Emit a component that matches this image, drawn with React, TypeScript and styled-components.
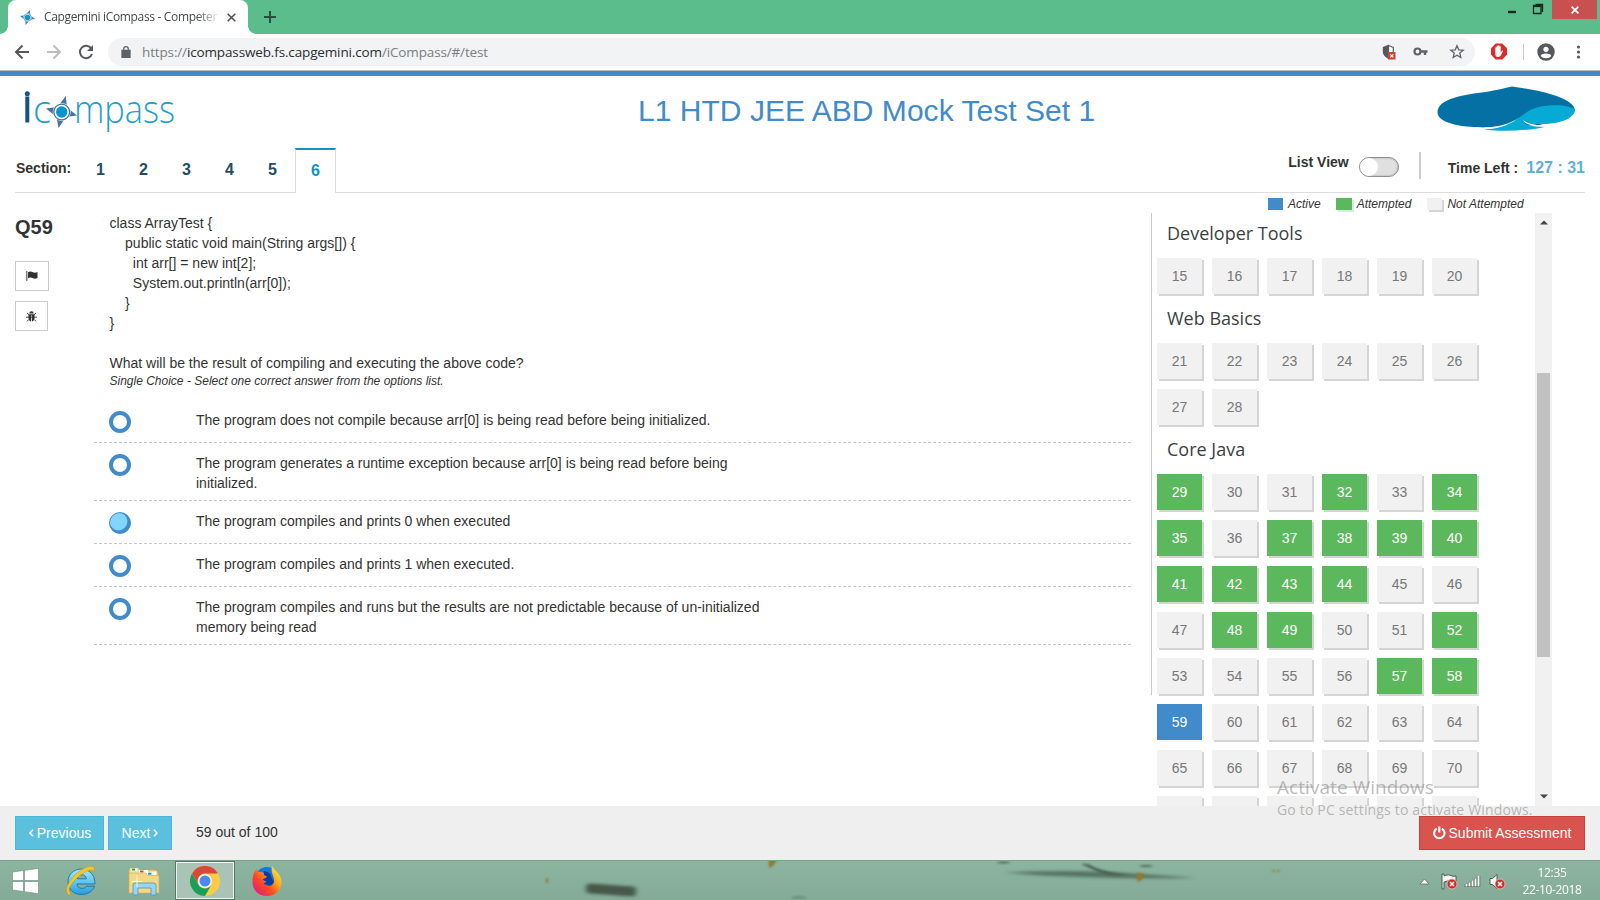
import React from "react";
import styled, { createGlobalStyle, css } from "styled-components";

const arial = `"Liberation Sans", Arial, sans-serif`;
const segoe = `"Open Sans", "Noto Sans", sans-serif`;

const GlobalStyle = createGlobalStyle`
  *, *::before, *::after { box-sizing: border-box; }
  body { margin: 0; background: #fff; color: #333; font-family: ${arial}; font-size: 14px; line-height: 20px; overflow: hidden; }
  svg { display: block; flex: none; }
  h1, h2, p, pre { margin: 0; font-weight: 400; }
`;

const Screen = styled.div`
  position: relative;
  display: flex;
  flex-direction: column;
  width: 1600px;
  height: 900px;
  overflow: hidden;
`;

/* Browser chrome */
const TabStrip = styled.div`
  display: flex;
  align-items: flex-start;
  height: 34px;
  padding-left: 8px;
  background: #5bbd8b;
  flex: none;
`;
const BrowserTab = styled.div`
  position: relative;
  display: flex;
  align-items: center;
  width: 240px;
  height: 34px;
  padding: 0 9px 0 12px;
  background: #fff;
  border-radius: 8px 8px 0 0;
  &::before, &::after {
    content: "";
    position: absolute;
    bottom: 0;
    width: 8px;
    height: 8px;
  }
  &::before { left: -8px; background: radial-gradient(circle at 0 0, transparent 7.5px, #fff 8px); }
  &::after { right: -8px; background: radial-gradient(circle at 100% 0, transparent 7.5px, #fff 8px); }
`;
const TabTitle = styled.div`
  width: 177px;
  margin-left: 9px;
  white-space: nowrap;
  font: 12px/20px ${segoe};
  letter-spacing: -0.34px;
  color: #45494d;
  mask-image: linear-gradient(90deg, #000 86%, transparent 100%);
`;
const TabClose = styled.svg`margin-left: auto; margin-right: 3px;`;
const NewTab = styled.svg`margin: 10px 0 0 15px;`;
const WindowButtons = styled.div`
  display: flex;
  align-items: flex-start;
  margin-left: auto;
  padding-right: 3px;
`;
const CloseWindow = styled.div`
  display: grid;
  place-items: center;
  width: 45px;
  height: 19px;
  background: #c75050;
`;
const Toolbar = styled.div`
  display: flex;
  align-items: center;
  height: 37px;
  padding: 0 12px 1px 14px;
  border-bottom: 1px solid #b9bcbf;
  flex: none;
`;
const NavIcons = styled.div`display: flex; gap: 16px; width: 94px;`;
const AddressBar = styled.div`
  display: flex;
  align-items: center;
  width: 1367px;
  height: 28px;
  padding: 0 5px 0 13px;
  border-radius: 14px;
  background: #f1f3f4;
`;
const Url = styled.div`
  margin-left: 11px;
  font: 13.5px/20px ${segoe};
  color: #7a7e83;
  letter-spacing: -0.14px;
  white-space: nowrap;
  b { font-weight: 400; color: #2b2d31; }
`;
const BarIcons = styled.div`display: flex; align-items: center; gap: 16px; margin-left: auto;`;
const ToolIcons = styled.div`display: flex; align-items: center; flex: 1; margin-left: 15px;`;
const ToolDivider = styled.i`width: 1px; height: 16px; margin: 0 13px 0 15px; background: #c9cccf;`;

/* Page header */
const PageHeader = styled.header`
  display: flex;
  align-items: flex-start;
  height: 71px;
  border-top: 5px solid #428bca;
  padding: 0 20px 0 20px;
  flex: none;
`;
const Title = styled.h1`
  margin: 18px 0 0 454px;
  font-size: 30px;
  line-height: 33px;
  letter-spacing: 0.03px;
  color: #428bca;
  white-space: nowrap;
`;
const BrandMark = styled.svg`margin: 8px 3px 0 auto;`;

const SectionBar = styled.nav`
  display: flex;
  height: 51px;
  margin: 0 15px;
  border-bottom: 1px solid #ddd;
  flex: none;
`;
const SectionLabel = styled.b`width: 64px; margin-top: 16px; padding-left: 1px;`;
const SectionTab = styled.div<{ $active?: boolean }>`
  width: 43px;
  height: 45px;
  margin-top: 6px;
  padding-top: 12px;
  text-align: center;
  font-size: 16px;
  font-weight: 700;
  color: #264c63;
  ${(p) => p.$active && css`
    width: 41px;
    margin-left: 1px;
    padding-top: 11px;
    color: #1390c4;
    background: #fff;
    border: 1px solid #ddd;
    border-top: 2px solid #1390c4;
    border-bottom: 0;
  `}
`;
const HeaderTools = styled.div`display: flex; margin-left: auto; align-items: flex-start;`;
const ListLabel = styled.b`margin-top: 10px;`;
const Toggle = styled.div`
  width: 40px;
  height: 20px;
  margin: 15px 20px 0 10px;
  border: 1px solid #8f8f8f;
  border-radius: 10px;
  background: #e0e0e0;
  box-shadow: inset 0 0 2px #999;
  &::before {
    content: "";
    display: block;
    width: 18px;
    height: 18px;
    border-radius: 50%;
    background: #fff;
  }
`;
const HeaderDivider = styled.i`width: 2px; height: 27px; margin: 10px 27px 0 0; background: #ccc;`;
const TimeLabel = styled.b`margin-top: 16px;`;
const TimeValue = styled.b`margin: 16px 0 0 8px; font-size: 16px; color: #5cb2d3;`;

/* Main area */
const Main = styled.main`display: flex; height: 613px; flex: none;`;
const QuestionSide = styled.aside`width: 94px; padding: 22px 0 0 15px;`;
const QuestionNo = styled.div`font-size: 20px; line-height: 24px; font-weight: 700; margin-bottom: 22px;`;
const SquareButton = styled.div<{ $w: number }>`
  display: grid;
  place-items: center;
  width: ${(p) => p.$w}px;
  height: 30px;
  margin-bottom: 10px;
  border: 1px solid #ccc;
`;
const Question = styled.section`width: 1037px; padding-top: 20px;`;
const Code = styled.pre`padding-left: 15.5px; font: 14px/20px ${arial};`;
const Prompt = styled.p`padding-left: 15.5px;`;
const Hint = styled.p`padding-left: 15.5px; font-size: 12px; line-height: 17px; font-style: italic;`;
const Options = styled.div`margin-top: 10px;`;
const Option = styled.div`
  display: flex;
  min-height: 43px;
  padding: 10px 0 7px 15px;
  border-bottom: 1px dashed #c6c6c6;
`;
const Radio = styled.div<{ $checked?: boolean }>`
  width: 22px;
  height: 22px;
  margin: 1px 65px -1px 0;
  border: 4px solid #428bca;
  border-radius: 50%;
  flex: none;
  ${(p) => p.$checked && css`
    border: 1px solid #428bca;
    background: radial-gradient(circle at 8.5px 8.5px, #82d5fd 8.3px, #428bca 9.3px);
  `}
`;

const SidePanel = styled.aside`margin-left: 20px; width: 434px;`;
const Legend = styled.div`
  display: flex;
  align-items: flex-start;
  height: 20px;
  padding: 5px 0 0 117px;
  font-size: 12px;
  line-height: 12px;
  font-style: italic;
`;
const LegendItem = styled.span`display: flex; white-space: nowrap; &:nth-child(2) { margin-left: 15px; } &:nth-child(3) { margin-left: 16px; }`;
const Swatch = styled.i<{ $color: string; $shadow: string; $w: number }>`
  width: ${(p) => p.$w}px;
  height: 12px;
  margin: 0 5px 0 0;
  background: ${(p) => p.$color};
  box-shadow: 2px 2px 0 ${(p) => p.$shadow};
`;
const PanelBody = styled.div`
  display: flex;
  height: 593px;
  overflow: hidden;
  background: linear-gradient(#ccc, #ccc) 0 0 / 1px 482px no-repeat;
`;
const Sections = styled.div`flex: 1; padding: 1px 0 0 6px;`;
const SectionName = styled.h2`padding: 7px 0 0 10px; height: 44px; font: 18px/24px ${segoe}; color: #3b3f42;`;
const Tiles = styled.div`
  display: grid;
  grid-template-columns: repeat(6, 45px);
  gap: 10px;
  margin-bottom: 5px;
`;
const tones = {
  none: css`background: #f1f1f1; color: #777; box-shadow: 2px 2px 0 #d5d5d5;`,
  done: css`background: #5cb85c; color: #fff; box-shadow: 2px 2px 0 #cfd8cf;`,
  active: css`background: #428bca; color: #fff; box-shadow: 2px 2px 0 #f3f8fc;`,
};
const Tile = styled.div<{ $tone: keyof typeof tones }>`
  height: 36px;
  line-height: 36px;
  text-align: center;
  ${(p) => tones[p.$tone]}
`;
const Scrollbar = styled.div`
  display: flex;
  flex-direction: column;
  align-items: center;
  width: 17px;
  margin-right: 33px;
  padding: 7px 0;
  background: #f1f1f1;
`;
const Thumb = styled.i`width: 13px; height: 284px; margin: 148px 0 auto; background: #c1c1c1;`;

/* Footer */
const Footer = styled.footer`
  display: flex;
  align-items: center;
  height: 54px;
  padding: 0 15px;
  background: #efefef;
  flex: none;
`;
const Button = styled.div<{ $w: number; $danger?: boolean }>`
  display: flex;
  align-items: center;
  justify-content: center;
  width: ${(p) => p.$w}px;
  height: 34px;
  color: #fff;
  white-space: nowrap;
  background: ${(p) => (p.$danger ? "#d9534f" : "#5bc0de")};
  border: 1px solid ${(p) => (p.$danger ? "#c9413d" : "#46b8da")};
  ${(p) => (p.$danger ? "margin-left: auto;" : "margin-right: 4px;")}
`;
const Progress = styled.span`margin: -2px 0 0 20px;`;

/* Taskbar */
const Taskbar = styled.div`
  position: relative;
  display: flex;
  height: 40px;
  border-top: 1px solid #7ca08f;
  background: linear-gradient(#8cb5a0, #84ab98);
  flex: none;
`;
const Wallpaper = styled.svg`position: absolute; left: 0; top: 0;`;
const TaskSlot = styled.div<{ $w: number; $open?: boolean }>`
  position: relative;
  display: grid;
  place-items: center;
  width: ${(p) => p.$w}px;
  height: 39px;
  ${(p) => p.$open && css`
    border: 1px solid #5b7468;
    background: #a9c3b6;
    box-shadow: inset 0 0 0 1px #eef5f1;
  `}
`;
const Tray = styled.div`position: relative; display: flex; align-items: flex-start; margin-left: auto; padding: 12px 18px 0 0;`;
const Clock = styled.div`
  width: 60px;
  margin: -9px 0 0 16px;
  font: 12px/17px ${segoe};
  letter-spacing: -0.35px;
  text-align: center;
  color: #fff;
  white-space: nowrap;
`;
const Watermark = styled.div`
  position: absolute;
  left: 1277px;
  top: 774px;
  color: rgba(130, 130, 130, 0.55);
  font: 19px/26px ${segoe};
  letter-spacing: 0.06px;
  white-space: nowrap;
`;
const WatermarkNote = styled.div`font-size: 14px; line-height: 20px; letter-spacing: 0.17px;`;

const Star4 = ({ size }: { size: number }) => (
  <svg width={size} height={size} viewBox="0 0 32 32">
    <path d="M21 0 22 11 32 19 21 21 12 32 11 22 0 13 11 11Z" fill="#4d7cab" />
    <circle cx="16" cy="16" r="9" fill="#fff" />
    <circle cx="16" cy="16" r="8" fill="none" stroke="#3c6e9f" strokeWidth="1.3" />
    <circle cx="16" cy="16" r="6" fill="#0c96cc" />
  </svg>
);

const Logo = () => (
  <svg width="164" height="66" viewBox="20 76 164 66">
    <g fontFamily="Open Sans, Noto Sans, sans-serif" fontWeight="300">
      <rect x="25.300" y="96.500" width="4" height="26" fill="#17508c" />
      <circle cx="27.300" cy="93.700" r="2.500" fill="#17508c" />
      <text x="33" y="122.500" fontSize="38" fill="#1f9fd0" textLength="18" lengthAdjust="spacingAndGlyphs">c</text>
      <text x="74" y="122.500" fontSize="38" fill="#1f9fd0" textLength="101" lengthAdjust="spacingAndGlyphs">mpass</text>
    </g>
    <path d="M65.800 96 67 107.500 77 115.500 66 117 58.500 128 56.500 117 46 108.500 57.500 107Z" fill="#46739f" />
    <circle cx="61.700" cy="112" r="9" fill="#fff" />
    <circle cx="61.700" cy="112" r="7.900" fill="none" stroke="#46739f" strokeWidth="1.300" />
    <circle cx="61.700" cy="112" r="5.700" fill="#0795cb" />
  </svg>
);

const Cross = ({ x, y }: { x: number; y: number }) => (
  <g>
    <circle cx={x} cy={y} r="5" fill="#cf2d28" stroke="#f1c3c0" strokeWidth=".8" />
    <path d={`M${x - 2} ${y - 2}l4 4m0-4l-4 4`} stroke="#fff" strokeWidth="1.6" />
  </g>
);

const done = new Set([29, 32, 34, 35, 37, 38, 39, 40, 41, 42, 43, 44, 48, 49, 52, 57, 58]);
const groups = [
  { name: "Developer Tools", from: 15, to: 20 },
  { name: "Web Basics", from: 21, to: 28 },
  { name: "Core Java", from: 29, to: 76 },
];
const code = `class ArrayTest {
    public static void main(String args[]) {
      int arr[] = new int[2];
      System.out.println(arr[0]);
    }
}

`;
const options: { lines: string[]; checked?: boolean }[] = [
  { lines: ["The program does not compile because arr[0] is being read before being initialized."] },
  { lines: ["The program generates a runtime exception because arr[0] is being read before being", "initialized."] },
  { lines: ["The program compiles and prints 0 when executed"], checked: true },
  { lines: ["The program compiles and prints 1 when executed."] },
  { lines: ["The program compiles and runs but the results are not predictable because of un-initialized", "memory being read"] },
];

const Chrome = () => (
  <>
    <TabStrip>
      <BrowserTab>
        <Star4 size={15} />
        <TabTitle>Capgemini iCompass - Competer</TabTitle>
        <TabClose width="9" height="9" viewBox="0 0 9 9"><path d="M.7.7l7.6 7.6m0-7.6L.7 8.3" stroke="#4a4d51" strokeWidth="1.5" /></TabClose>
      </BrowserTab>
      <NewTab width="14" height="14" viewBox="0 0 14 14"><path d="M7 1v12M1 7h12" stroke="#2c4c3d" strokeWidth="2" /></NewTab>
      <WindowButtons>
        <svg width="44" height="19" viewBox="0 0 44 19">
          <path d="M0 12h8" stroke="#16281f" strokeWidth="2.4" />
          <path d="M25.5 5.5h7.5v8h-7.5zM27.500 4.500h7v7.500" fill="none" stroke="#16281f" strokeWidth="1.3" />
          <path d="M25 6.300h8" stroke="#16281f" strokeWidth="1.6" />
        </svg>
        <CloseWindow><svg width="8" height="8" viewBox="0 0 8 8"><path d="M.6.6l6.800 6.800m0-6.800L.6 7.400" stroke="#fff" strokeWidth="1.7" /></svg></CloseWindow>
      </WindowButtons>
    </TabStrip>
    <Toolbar>
      <NavIcons>
        <svg width="16" height="16" viewBox="0 0 16 16"><path d="M15 8H2m6.500-6.500L2 8l6.500 6.500" fill="none" stroke="#55585c" strokeWidth="2" /></svg>
        <svg width="16" height="16" viewBox="0 0 16 16"><path d="M1 8h13M7.500 1.500L14 8l-6.500 6.500" fill="none" stroke="#bcbec1" strokeWidth="2" /></svg>
        <svg width="16" height="16" viewBox="0 0 16 16"><path d="M13.300 4.500A6.200 6.200 0 1 0 14 10" fill="none" stroke="#55585c" strokeWidth="2" /><path d="M15 1v6H9z" fill="#55585c" /></svg>
      </NavIcons>
      <AddressBar>
        <svg width="10" height="12" viewBox="0 0 10 12"><path d="M1 4.500h8v7H1zM2.700 5V3a2.300 2.300 0 0 1 4.600 0v2" fill="none" stroke="#5f6368" strokeWidth="1.300" /><path d="M1 4.500h8v7H1z" fill="#5f6368" /></svg>
        <Url>https://<b>icompassweb.fs.capgemini.com</b>/iCompass/#/test</Url>
        <BarIcons>
          <svg width="15" height="16" viewBox="0 0 15 16">
            <path d="M6.500 1.500L11.300 3.500V7.500C11.300 11 9 13 6.500 14Z" fill="#fff" stroke="#5f6368" strokeWidth="1.300" />
            <path d="M6.500 .8V14.700C3.500 13.500.8 11 .8 7.500V3Z" fill="#55585c" />
            <path d="M6 8h7.500v7.500H6z" fill="#cb4438" /><path d="M8.300 10.300l3 3m0-3l-3 3" stroke="#fff" strokeWidth="1.100" />
          </svg>
          <svg width="15" height="10" viewBox="0 0 15 10"><circle cx="4.500" cy="4.500" r="3" fill="none" stroke="#5f6368" strokeWidth="2.200" /><path d="M7 4.500h7.500M12 4v4" stroke="#5f6368" strokeWidth="2.400" /></svg>
          <svg width="26" height="16" viewBox="-5.500 0 26 16"><path d="M7.500 1.700l1.750 4.100 4.450.4-3.400 2.900 1 4.400-3.800-2.300-3.800 2.300 1-4.400-3.400-2.900 4.450-.4z" fill="none" stroke="#5f6368" strokeWidth="1.300" /></svg>
        </BarIcons>
      </AddressBar>
      <ToolIcons>
        <svg width="18" height="17" viewBox="0 0 18 17">
          <path d="M5.700.5h6.600L17 5.200v6.600l-4.700 4.700H5.700L1 11.800V5.200z" fill="#d92c2c" />
          <path d="M5.300 8.500V4.600q.8-.8 1.300 0V7.500 3q.8-.8 1.400 0v4.200V2.600q.8-.8 1.400 0v4.600V3.400q.8-.8 1.300 0v5.800l1.400-1.700q1-.3.900.5l-2.200 4.600q-.8 1.400-2.700 1.400-2.800 0-2.800-3z" fill="#fff" />
        </svg>
        <ToolDivider />
        <svg width="18" height="18" viewBox="0 0 18 18"><circle cx="9" cy="9" r="8.700" fill="#55585c" /><circle cx="9" cy="6.300" r="2.600" fill="#fff" /><path d="M3.700 13c1.200-3.200 9.400-3.200 10.600 0-2.400 3-8.200 3-10.600 0z" fill="#fff" /></svg>
        <svg width="30" height="14" viewBox="0 0 30 14"><g fill="#55585c"><circle cx="23.500" cy="2" r="1.600" /><circle cx="23.500" cy="7" r="1.600" /><circle cx="23.500" cy="12" r="1.600" /></g></svg>
      </ToolIcons>
    </Toolbar>
  </>
);

const Icons = {
  windows: <svg width="27" height="26" viewBox="0 0 27 26"><g fill="#fff" stroke="#698d7c" strokeWidth=".6"><path d="M.5 4l11-1.500v10H.5zM12.500 2.300L26.500.4v12.100h-14zM.5 13.500h11v10L.5 22zM12.500 13.500h14v12.200l-14-2z" /></g></svg>,
  ie: (
    <svg width="32" height="32" viewBox="0 0 32 32">
      <defs><linearGradient id="ieBlue" x1="0" y1="0" x2="0" y2="1"><stop offset="0" stopColor="#a5e6fb" /><stop offset=".5" stopColor="#5cc8f2" /><stop offset="1" stopColor="#2a9bdc" /></linearGradient></defs>
      <path d="M30 19H12c.2 5 7.500 5.800 9.500 2.200h8C26 33 3 33 3 16.500 3 .5 30-1.500 30 19zM12.300 13.800h9c-.5-5.300-8.300-5.300-9 0z" fill="url(#ieBlue)" stroke="#2277ad" strokeWidth="1" />
      <path d="M4.500 30C-3 27 5 13 14 6.500 22 .5 32-1.500 28.500 7c-.3-4-7-1.500-13.500 3.500C7 16.500.5 27 6 27.800z" fill="#f3c62e" stroke="#c79812" strokeWidth=".5" />
    </svg>
  ),
  explorer: (
    <svg width="32" height="30" viewBox="0 0 32 30">
      <path d="M2 1.500h8l1.500 2.500H27q3 0 3 3v19H1V4z" fill="#f5e2a0" stroke="#caa550" />
      <path d="M4 2.500h5v2.200H4z" fill="#fff" /><path d="M4 2.500h3v2H4z" fill="#2ca63f" />
      <path d="M11 4h9v3h-9z" fill="#fff" /><path d="M12 4.500h3.500v2H12z" fill="#d04a2b" />
      <path d="M19 6.200h9v3h-9z" fill="#fff" /><path d="M20 6.700h3.500v2H20z" fill="#2b8fd0" />
      <path d="M1 7h17l2 2.500h11V27H1z" fill="#f4d883" stroke="#cfae5c" strokeWidth=".6" />
      <path d="M5 29V19q0-2 2-2h18.500q2.500 0 2.500 2v10h-5v-7H10v7z" fill="#9bd4ee" stroke="#4c95bd" strokeWidth=".8" />
      <path d="M9 9v12M3.500 15.500h11" stroke="#fff" opacity=".8" />
    </svg>
  ),
  chrome: (
    <svg width="30" height="30" viewBox="0 0 30 30">
      <circle cx="15" cy="15" r="15" fill="#fc4" />
      <path d="M2 7.500A15 15 0 0 1 28 7.500H15A7.500 7.500 0 0 0 8.500 18.700z" fill="#d8473a" />
      <path d="M2 7.500A15 15 0 0 0 15 30l6.500-11.300A7.500 7.500 0 0 1 8.500 18.700z" fill="#1a9f5b" />
      <circle cx="15" cy="15" r="6.900" fill="#f4f6f8" /><circle cx="15" cy="15" r="5.500" fill="#4a88f0" />
    </svg>
  ),
  firefox: (
    <svg width="30" height="32" viewBox="0 0 30 32">
      <defs>
        <linearGradient id="foxBody" x1="1" y1="0" x2=".1" y2=".9"><stop offset=".1" stopColor="#fff044" /><stop offset=".4" stopColor="#ffa51a" /><stop offset=".68" stopColor="#fb4a24" /><stop offset="1" stopColor="#e5197b" /></linearGradient>
      </defs>
      <circle cx="15" cy="14.500" r="12.500" fill="#1477dd" />
      <path d="M12 6q6 1 7 5t4 6l-4 4-9-3z" fill="#0b3f9c" />
      <path d="M20 1c2 4 9 7.500 9.500 15.500C30 25 23 31 15 31S0 25 .5 16C.7 11 2 6 5 3.500c0 2 .4 3 1 3.500 2-.8 4 0 6 1-1 1.500 1 3 3 3.500-1 2-3 2-4 2.500 0 2 2 1.500 3.500 2.500-1 1.500-2 1.500-3 1.500 2.500 4.500 9 4 10.500-1C23.500 13 18 8 20 1z" fill="url(#foxBody)" />
    </svg>
  ),
};

export default function App() {
  return (
    <Screen>
      <GlobalStyle />
      <Chrome />
      <PageHeader>
        <Logo />
        <Title>L1 HTD JEE ABD Mock Test Set 1</Title>
        <BrandMark width="140" height="48" viewBox="1437 84 140 48">
          <path d="M1437.500 112C1438 101 1455 96 1478 93 1494 91 1503 88.500 1512 86.500 1530 89 1575 96 1575 111L1540 125 1500 127C1465 129 1437 124 1437.500 112Z" fill="#0570a3" />
          <path d="M1484 129.500C1505 128 1519 118 1527 112 1540 103 1570 104 1575 110 1574 120 1556 125 1535 124 1529 123.500 1525 122 1522 120 1524 125 1533 127 1546 126.500 1530 131 1500 132 1484 129.500Z" fill="#06abd5" />
          <path d="M1522.500 120C1529 125 1544 127 1557 124.500 1550 128 1527 128 1522.500 120ZM1484 129.500C1500 129 1513 123 1519 117.500 1511 123.500 1500 127 1484 127.500Z" fill="#fff" />
        </BrandMark>
      </PageHeader>
      <SectionBar>
        <SectionLabel>Section:</SectionLabel>
        {[1, 2, 3, 4, 5, 6].map((n) => <SectionTab key={n} $active={n === 6}>{n}</SectionTab>)}
        <HeaderTools>
          <ListLabel>List View</ListLabel>
          <Toggle />
          <HeaderDivider />
          <TimeLabel>Time Left :</TimeLabel>
          <TimeValue>127 : 31</TimeValue>
        </HeaderTools>
      </SectionBar>
      <Main>
        <QuestionSide>
          <QuestionNo>Q59</QuestionNo>
          <SquareButton $w={34}>
            <svg width="12" height="10" viewBox="0 0 12 10"><path d="M.8 0v10" stroke="#555" strokeWidth="1.100" /><path d="M2 1.200q2.500-1.500 5 0 2.200 1 4.500-.3v6q-2.300 1.300-4.500.3-2.500-1.500-5 0z" fill="#333" /></svg>
          </SquareButton>
          <SquareButton $w={33}>
            <svg width="11" height="11" viewBox="0 0 11 11"><path d="M3.300 2.500a2.200 2.200 0 0 1 4.400 0z" fill="#333" /><path d="M2.500 3.200h6v4.500q-1 2.700-2.600 2.800V4.500h-.8v6Q3.500 10.400 2.500 7.700z" fill="#333" /><path d="M1 2l2 1.800M10 2L8 3.800M0 6.200h11M1 10.300l2-2M10 10.300l-2-2" stroke="#333" strokeWidth=".9" /></svg>
          </SquareButton>
        </QuestionSide>
        <Question>
          <Code>{code}</Code>
          <Prompt>What will be the result of compiling and executing the above code?</Prompt>
          <Hint>Single Choice - Select one correct answer from the options list.</Hint>
          <Options>
            {options.map((o) => (
              <Option key={o.lines[0]}>
                <Radio $checked={o.checked} />
                <div>{o.lines.map((l) => <div key={l}>{l}</div>)}</div>
              </Option>
            ))}
          </Options>
        </Question>
        <SidePanel>
          <Legend>
            <LegendItem><Swatch $w={15} $color="#428bca" $shadow="transparent" />Active</LegendItem>
            <LegendItem><Swatch $w={16} $color="#5cb85c" $shadow="#d3e8f3" />Attempted</LegendItem>
            <LegendItem><Swatch $w={15} $color="#f1f1f1" $shadow="#d5d5d5" />Not Attempted</LegendItem>
          </Legend>
          <PanelBody>
            <Sections>
              {groups.map((g) => (
                <React.Fragment key={g.name}>
                  <SectionName>{g.name}</SectionName>
                  <Tiles>
                    {Array.from({ length: g.to - g.from + 1 }, (_, i) => g.from + i).map((n) => (
                      <Tile key={n} $tone={n === 59 ? "active" : done.has(n) ? "done" : "none"}>{n > 70 ? "" : n}</Tile>
                    ))}
                  </Tiles>
                </React.Fragment>
              ))}
            </Sections>
            <Scrollbar>
              <svg width="8" height="5" viewBox="0 0 8 5"><path d="M0 4.500L4 .5l4 4z" fill="#444" /></svg>
              <Thumb />
              <svg width="8" height="5" viewBox="0 0 8 5"><path d="M0 .5l4 4 4-4z" fill="#444" /></svg>
            </Scrollbar>
          </PanelBody>
        </SidePanel>
      </Main>
      <Footer>
        <Button $w={89}>
          <svg width="9" height="10" viewBox="0 0 9 10"><path d="M5 1.800L2 5 5 8.200" fill="none" stroke="#fff" strokeWidth="1.600" /></svg>
          Previous
        </Button>
        <Button $w={64}>
          Next
          <svg width="8" height="10" viewBox="0 0 8 10"><path d="M4 1.800L7 5 4 8.200" fill="none" stroke="#fff" strokeWidth="1.600" /></svg>
        </Button>
        <Progress>59 out of 100</Progress>
        <Button $w={166} $danger>
          <svg width="16" height="14" viewBox="0 0 16 14"><path d="M3.700 2.600a5.200 5.200 0 1 0 5.200 0M6.300.5v6" fill="none" stroke="#fff" strokeWidth="2.100" /></svg>
          Submit Assessment
        </Button>
      </Footer>
      <Taskbar>
        <Wallpaper width="1600" height="39" viewBox="0 861 1600 39">
          <defs>
            <filter id="soft" filterUnits="userSpaceOnUse" x="500" y="840" width="800" height="80"><feGaussianBlur stdDeviation="2.400 1.500" /></filter>
            <filter id="slight" filterUnits="userSpaceOnUse" x="500" y="840" width="900" height="80"><feGaussianBlur stdDeviation=".8" /></filter>
          </defs>
          <g filter="url(#soft)">
            <rect x="586" y="885" width="50" height="10" rx="4" transform="rotate(4 611 890)" fill="#46584a" />
            <path d="M1005 872.500Q1060 870 1110 872 1160 875 1195 878 1130 879 1080 877 1040 876 1005 872.500Z" fill="#4c6a5b" opacity=".85" />
          </g>
          <g filter="url(#slight)">
            <path d="M1081 864q7-1 13 3 14 6 34 8-22 2-34-5z" fill="#48604f" />
            <path d="M996 862.500q8-2 15 0-8 1.800-15 0zM1138 866q8-2 16 0-8 2-16 0z" fill="#4c6656" />
            <path d="M792 897q7-2 14 0v2h-14z" fill="#6c917f" />
            <path d="M769 859h8q-2 6-7 9-2-2-1-9zM1137 873l7 1q-1 6-6 8-2-4-1-9zM546 878h2v5h-2z" fill="#92792f" />
            <path d="M1272 870h3v2h-3zM1277 870h3v2h-3z" fill="#8c863f" />
          </g>
        </Wallpaper>
        <TaskSlot $w={50}>{Icons.windows}</TaskSlot>
        <TaskSlot $w={62}>{Icons.ie}</TaskSlot>
        <TaskSlot $w={63}>{Icons.explorer}</TaskSlot>
        <TaskSlot $w={60} $open>{Icons.chrome}</TaskSlot>
        <TaskSlot $w={64}>{Icons.firefox}</TaskSlot>
        <Tray>
          <svg width="88" height="18" viewBox="1418 873 88 18">
            <path d="M1420 884l4.500-5 4.500 5z" fill="#fff" stroke="#4b6457" strokeWidth=".7" />
            <path d="M1442 874v15h2v-7q4-2 7 0t5 0v-6q-3 1-5-.5t-7 .3v-1.800z" fill="#f3f6f4" stroke="#3c5347" strokeWidth=".9" />
            <Cross x={1452} y={884} />
            <g stroke="#fff" strokeWidth="2">
              <path d="M1466.500 884v3M1469.500 882.500v4.500M1472.500 880.500v6.500M1475.500 878.500v8.500M1478.500 876v11" stroke="#3c5347" strokeWidth="3.400" />
              <path d="M1466.500 884v2.500M1469.500 882.500v4M1472.500 880.500v6M1475.500 878.500v8M1478.500 876v10.500" />
            </g>
            <path d="M1490 878.500h2.500l4.500-4v14l-4.500-4h-2.500z" fill="#f3f6f4" stroke="#3c5347" strokeWidth=".9" />
            <Cross x={1500} y={884} />
          </svg>
          <Clock>12:35<br />22-10-2018</Clock>
        </Tray>
      </Taskbar>
      <Watermark>
        Activate Windows
        <WatermarkNote>Go to PC settings to activate Windows.</WatermarkNote>
      </Watermark>
    </Screen>
  );
}
